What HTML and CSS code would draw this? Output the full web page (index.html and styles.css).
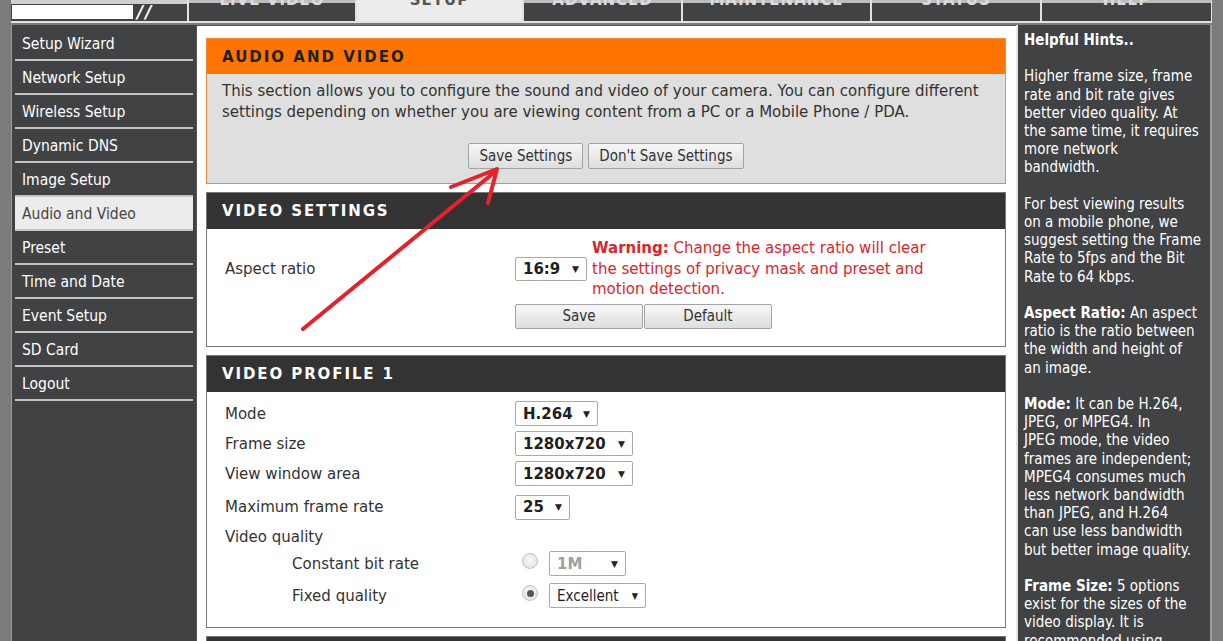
FILE: index.html
```html
<!DOCTYPE html>
<html lang="en">
<head>
    <meta charset="UTF-8">
    <meta name="viewport" content="width=device-width, initial-scale=1.0">
    <title>Audio and Video</title>
    <link rel="stylesheet" href="styles.css">
</head>
<body>

    <div class="frame">
        <div class="topnav">
            <div class="logo"><span class="logo-box"></span><span class="logo-mark">//</span></div>
            <div class="tab tab-live"><span>LIVE VIDEO</span></div>
            <div class="tab tab-setup active"><span>SETUP</span></div>
            <div class="tab tab-adv"><span>ADVANCED</span></div>
            <div class="tab tab-maint"><span>MAINTENANCE</span></div>
            <div class="tab tab-status"><span>STATUS</span></div>
            <div class="tab tab-help"><span>HELP</span></div>
        </div>

        <div class="layout">
            <div class="sidebar">
                <div class="menu-item">Setup Wizard</div>
                <div class="menu-item">Network Setup</div>
                <div class="menu-item">Wireless Setup</div>
                <div class="menu-item">Dynamic DNS</div>
                <div class="menu-item">Image Setup</div>
                <div class="menu-item active">Audio and Video</div>
                <div class="menu-item">Preset</div>
                <div class="menu-item">Time and Date</div>
                <div class="menu-item">Event Setup</div>
                <div class="menu-item">SD Card</div>
                <div class="menu-item">Logout</div>
            </div>

            <div class="main">
                <div class="panel panel-intro">
                    <div class="panel-header">AUDIO AND VIDEO</div>
                    <div class="panel-body">
                        <p>This section allows you to configure the sound and video of your camera. You can configure different<br>
                        settings depending on whether you are viewing content from a PC or a Mobile Phone / PDA.</p>
                        <div class="intro-buttons">
                            <button class="btn">Save Settings</button>
                            <button class="btn">Don't Save Settings</button>
                        </div>
                    </div>
                </div>

                <div class="panel">
                    <div class="panel-header">VIDEO SETTINGS</div>
                    <div class="panel-body settings-body">
                        <div class="aspect-row">
                            <div class="label">Aspect ratio</div>
                            <span class="select sel-aspect">16:9</span>
                            <p class="warning"><b>Warning:</b> Change the aspect ratio will clear<br>
                            the settings of privacy mask and preset and<br>
                            motion detection.</p>
                        </div>
                        <div class="aspect-buttons">
                            <button class="btn btn-wide">Save</button>
                            <button class="btn btn-wide">Default</button>
                        </div>
                    </div>
                </div>

                <div class="panel">
                    <div class="panel-header">VIDEO PROFILE 1</div>
                    <div class="panel-body profile-body">
                        <div class="row">
                            <div class="label">Mode</div>
                            <span class="select sel-mode">H.264</span>
                        </div>
                        <div class="row">
                            <div class="label">Frame size</div>
                            <span class="select sel-size">1280x720</span>
                        </div>
                        <div class="row">
                            <div class="label">View window area</div>
                            <span class="select sel-size">1280x720</span>
                        </div>
                        <div class="row row-tall">
                            <div class="label">Maximum frame rate</div>
                            <span class="select sel-rate">25</span>
                        </div>
                        <div class="row row-short">
                            <div class="label">Video quality</div>
                        </div>
                        <div class="row row-sub">
                            <div class="label sub-label">Constant bit rate</div>
                            <span class="radio"></span>
                            <span class="select sel-bitrate disabled">1M</span>
                        </div>
                        <div class="row row-sub">
                            <div class="label sub-label">Fixed quality</div>
                            <span class="radio checked"></span>
                            <span class="select sel-quality">Excellent</span>
                        </div>
                    </div>
                </div>

                <div class="panel">
                    <div class="panel-header">VIDEO PROFILE 2</div>
                </div>
            </div>

            <div class="hints">
                <p><b>Helpful Hints..</b></p>
                <p>Higher frame size, frame<br>rate and bit rate gives<br>better video quality. At<br>the same time, it requires<br>more network<br>bandwidth.</p>
                <p>For best viewing results<br>on a mobile phone, we<br>suggest setting the Frame<br>Rate to 5fps and the Bit<br>Rate to 64 kbps.</p>
                <p><b>Aspect Ratio:</b> An aspect<br>ratio is the ratio between<br>the width and height of<br>an image.</p>
                <p><b>Mode:</b> It can be H.264,<br>JPEG, or MPEG4. In<br>JPEG mode, the video<br>frames are independent;<br>MPEG4 consumes much<br>less network bandwidth<br>than JPEG, and H.264<br>can use less bandwidth<br>but better image quality.</p>
                <p><b>Frame Size:</b> 5 options<br>exist for the sizes of the<br>video display. It is<br>recommended using</p>
            </div>
        </div>
    </div>

    <!-- hand drawn red arrow pointing at Save Settings -->
    <svg class="arrow" width="1223" height="641" viewBox="0 0 1223 641">
        <path d="M303 329 L496 171 M451 187 L497 169 L488 203" fill="none" stroke="#e5222b" stroke-width="4" stroke-linecap="round" stroke-linejoin="round"/>
    </svg>

</body>
</html>
```

FILE: styles.css
```css
* {
    margin: 0;
    padding: 0;
    box-sizing: border-box;
}

html,
body {
    height: 100%;
    overflow: hidden;
}

body {
    background-color: #7b7b7b;
    font-family: "DejaVu Sans", sans-serif;
    font-size: 15px;
    color: #333;
}


.frame {
    margin-left: 11px;
    width: 1201px;
    height: 100%;
    display: flex;
    flex-direction: column;
}


/* top navigation */

.topnav {
    display: flex;
    gap: 2px;
    height: 23px;
    background-color: #e2e2e2;
    border-bottom: 2px solid #e2e2e2;
    flex-shrink: 0;
}

.logo {
    width: 176px;
    background: linear-gradient(#cfcfcf 0 4px, #404244 4px);
    display: flex;
    align-items: center;
    padding-top: 2px;
}

.logo-box {
    width: 121px;
    height: 14px;
    background-color: #fff;
    margin-left: 1px;
}

.logo-mark {
    font-size: 17px;
    font-weight: bold;
    font-style: italic;
    color: #fff;
    letter-spacing: 2px;
    margin-left: 4px;
    line-height: 14px;
}

.tab {
    background: linear-gradient(#bdbdbd 0 3px, #404244 3px);
    color: #dcdcdc;
    display: flex;
    justify-content: center;
    overflow: hidden;
    font-weight: bold;
    letter-spacing: 1px;
}

.tab span {
    margin-top: -8px;
    line-height: 16px;
}

.tab.active {
    background: #ececec;
    color: #555;
}

.tab-live { width: 166px; }
.tab-setup { width: 165px; }
.tab-adv { width: 157px; }
.tab-maint { width: 187px; }
.tab-status { width: 168px; }
.tab-help { width: 169px; }


.layout {
    flex: 1;
    display: flex;
    padding-top: 2px;
    min-height: 0;
}


/* left menu */

.sidebar {
    width: 185px;
    background-color: #404244;
    border-left: 1px solid #9a9a9a;
    padding: 2px 3px 0 3px;
    font-family: "DejaVu Sans Condensed", "DejaVu Sans", sans-serif;
    font-size: 15.5px;
}

.menu-item {
    height: 34px;
    line-height: 35px;
    padding-left: 7px;
    color: #fff;
    border-bottom: 2px solid #c4c4c4;
}

.menu-item.active {
    background-color: #ececec;
    color: #444;
}


/* main column */

.main {
    width: 820px;
    background-color: #fff;
    border-left: 1px solid #555;
    border-top: 1px solid #555;
    padding: 12px 10px 0 9px;
    overflow: hidden;
}

.panel {
    border: 1px solid #767676;
    margin-bottom: 8px;
}

.panel-header {
    height: 36px;
    line-height: 37px;
    padding-left: 15px;
    background-color: #333;
    color: #fff;
    font-weight: bold;
    font-size: 15px;
    letter-spacing: 1.9px;
}

.panel-body {
    padding: 8px 18px 16px 18px;
}

.panel-intro {
    border-color: #f08a3a;
}

.panel-intro .panel-header {
    height: 35px;
    background-color: #ff7300;
    color: #222;
    letter-spacing: 2px;
}

.panel-intro .panel-body {
    background-color: #dfdfdf;
    padding: 7px 15px 14px 15px;
    line-height: 21px;
}

.intro-buttons {
    display: flex;
    justify-content: center;
    gap: 5px;
    margin-top: 20px;
}

.btn {
    height: 26px;
    padding: 0 10px;
    font-family: "DejaVu Sans Condensed", "DejaVu Sans", sans-serif;
    font-size: 15px;
    color: #333;
    background: linear-gradient(#f7f7f7, #dedede);
    border: 1px solid #a3a3a3;
    border-radius: 2px;
}

.btn-wide {
    width: 128px;
    height: 25px;
}


/* video settings */

.settings-body {
    padding: 9px 18px 17px 18px;
}

.label {
    width: 290px;
    flex-shrink: 0;
}

.aspect-row {
    display: flex;
    align-items: center;
}

.warning {
    color: #d9262c;
    line-height: 20.5px;
    margin-left: 5px;
}

.aspect-buttons {
    display: flex;
    gap: 1px;
    margin: 4px 0 0 290px;
}


/* selects and radios */

.select {
    display: inline-flex;
    align-items: center;
    justify-content: space-between;
    height: 25px;
    padding: 0 7px;
    background-color: #fff;
    border: 1px solid #a9a9a9;
    border-radius: 2px;
    font-weight: bold;
    color: #1e1e1e;
    flex-shrink: 0;
}

.select::after {
    content: "\25BC";
    font-size: 9px;
    color: #222;
}

.sel-aspect { width: 72px; height: 24px; }
.sel-mode { width: 83px; }
.sel-size { width: 118px; }
.sel-rate { width: 55px; }
.sel-bitrate { width: 77px; }

.sel-quality {
    width: 97px;
    font-weight: normal;
    font-family: "DejaVu Sans Condensed", "DejaVu Sans", sans-serif;
}

.select.disabled {
    color: #a0a0a0;
}

.radio {
    width: 16px;
    height: 16px;
    border-radius: 50%;
    border: 1px solid #c2c2c2;
    background: radial-gradient(circle at 50% 40%, #fafafa, #dcdcdc);
    margin: -5px 11px 0 7px;
    display: flex;
    align-items: center;
    justify-content: center;
    flex-shrink: 0;
}

.radio.checked::after {
    content: "";
    width: 7px;
    height: 7px;
    border-radius: 50%;
    background-color: #555;
}


/* video profile */

.profile-body {
    padding: 7px 18px 15px 18px;
}

.row {
    display: flex;
    align-items: center;
    height: 30px;
}

.row-tall {
    height: 37px;
}

.row-short {
    height: 22px;
}

.row-sub {
    height: 32px;
}

.sub-label {
    padding-left: 67px;
}


/* hints column */

.hints {
    flex: 1;
    background-color: #404244;
    border-left: 2px solid #e6e6e6;
    border-right: 2px solid #9a9a9a;
    padding: 6px 4px 0 6px;
    color: #fff;
    font-family: "DejaVu Sans Condensed", "DejaVu Sans", sans-serif;
    line-height: 18.2px;
    white-space: nowrap;
    overflow: hidden;
}

.hints p {
    margin-bottom: 18.2px;
}


.arrow {
    position: absolute;
    top: 0;
    left: 0;
    pointer-events: none;
}
```
